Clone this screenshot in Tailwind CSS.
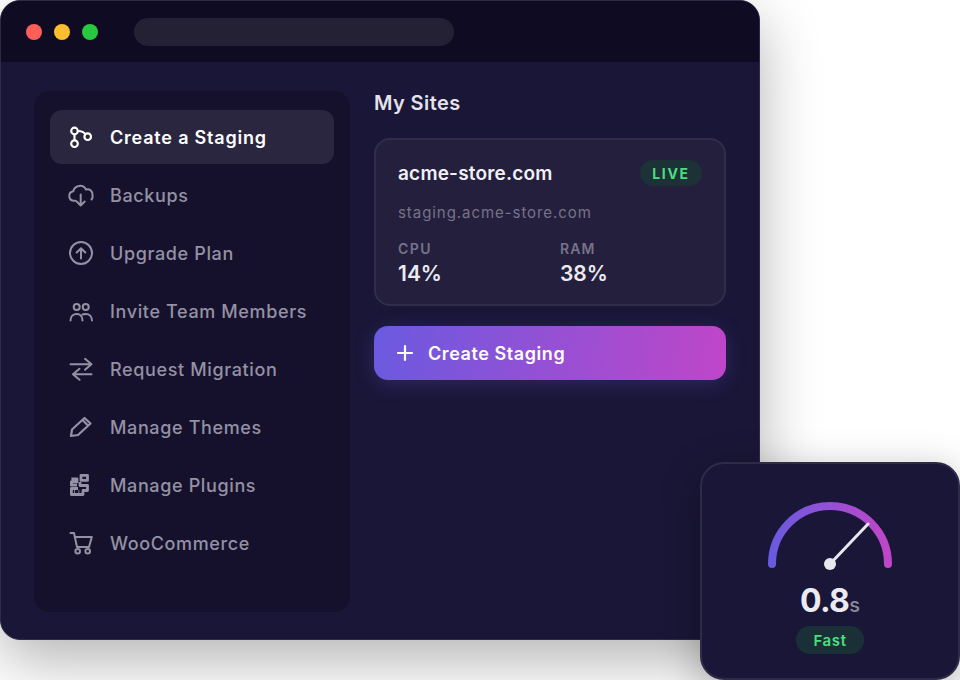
<!DOCTYPE html>
<html>
<head>
<meta charset="utf-8">
<script src="https://cdn.jsdelivr.net/npm/@tailwindcss/browser@4"></script>
</head>
<body class="bg-white">
<div class="relative w-[960px] h-[680px] overflow-hidden bg-white font-['Inter',sans-serif]">
  <div class="w-[760px] h-[640px] rounded-[20px] bg-[#1a1637] border border-[#2e2a47] shadow-[0_20px_60px_rgba(0,0,0,0.3)] overflow-hidden flex flex-col box-border">
    <div class="h-[61px] shrink-0 bg-[#0e0b23] flex items-center pl-[25px] pt-[1px]">
      <span class="w-4 h-4 rounded-full bg-[#ff5f57]"></span>
      <span class="w-4 h-4 rounded-full bg-[#febc2e] ml-3"></span>
      <span class="w-4 h-4 rounded-full bg-[#28c840] ml-3"></span>
      <span class="w-[320px] h-7 rounded-[14px] bg-[#242135] ml-[36px]"></span>
    </div>
    <div class="flex-1 flex pl-[33px] pt-[29px] gap-6">
      <nav class="w-[316px] h-[521px] rounded-2xl bg-[#15112c] px-4 pt-[19px] flex flex-col gap-1">
        <a class="h-[54px] shrink-0 rounded-xl bg-[#2a2640] flex items-center gap-[17px] pl-[19px] text-white font-semibold text-lg tracking-[0.800px]">
          <svg class="w-6 h-6 shrink-0 overflow-visible" viewBox="0 0 24 24" fill="none" stroke="currentColor" stroke-width="2.200"><circle cx="5.500" cy="6" r="3.300"/><circle cx="5.500" cy="18.700" r="3.300"/><circle cx="18.700" cy="11.700" r="3.300"/><path d="M5.500 9.300v6.100M8.800 6c2.500 0 5.700 0 7.500 3.300"/></svg>
          <span class="pt-[2px]">Create a Staging</span>
        </a>
        <a class="h-[54px] shrink-0 rounded-xl flex items-center gap-[17px] pl-[19px] text-[#9491a5] font-medium text-lg tracking-[0.630px]">
          <svg class="w-6 h-6 shrink-0 overflow-visible" viewBox="0 0 24 24" fill="none" stroke="currentColor" stroke-width="2" stroke-linecap="round" stroke-linejoin="round"><path d="M6.500 17.800H4.500a4.800 4.800 0 0 1-.2-9.500A6.800 6.800 0 0 1 17 6.500a5 5 0 0 1 6.500 5.500 5 5 0 0 1-1 4.500"/><path d="M11.700 11.500v11M7.700 18.500l4 4 4-4"/></svg>
          <span class="pt-[2px]">Backups</span>
        </a>
        <a class="h-[54px] shrink-0 rounded-xl flex items-center gap-[17px] pl-[19px] text-[#9491a5] font-medium text-lg tracking-[0.630px]">
          <svg class="w-6 h-6 shrink-0" viewBox="0 0 24 24" fill="none" stroke="currentColor" stroke-width="2" stroke-linecap="round" stroke-linejoin="round"><circle cx="12" cy="12" r="11"/><path d="M12 17.500V7.500M7.700 11.500l4.300-4.300 4.300 4.300"/></svg>
          <span class="pt-[2px]">Upgrade Plan</span>
        </a>
        <a class="h-[54px] shrink-0 rounded-xl flex items-center gap-[17px] pl-[19px] text-[#9491a5] font-medium text-lg tracking-[0.630px]">
          <svg class="w-6 h-6 shrink-0" viewBox="0 0 24 24" fill="none" stroke="currentColor" stroke-width="2" stroke-linecap="round"><circle cx="7.700" cy="8" r="3"/><circle cx="16.700" cy="8" r="3"/><path d="M1.500 21.500c0-4 2.800-6.500 6.200-6.500s5.800 2.500 5.800 6.500M13.500 15.500c1-.4 2-.5 3.200-.5 3.500 0 6.300 2.500 6.300 6.500"/></svg>
          <span class="pt-[2px]">Invite Team Members</span>
        </a>
        <a class="h-[54px] shrink-0 rounded-xl flex items-center gap-[17px] pl-[19px] text-[#9491a5] font-medium text-lg tracking-[0.630px]">
          <svg class="w-6 h-6 shrink-0" viewBox="0 0 24 24" fill="none" stroke="currentColor" stroke-width="2" stroke-linecap="round" stroke-linejoin="round"><path d="M1.500 7.300H22.500M16 1.800l6.500 5.500-6.500 5.500"/><path d="M22.500 17.300H4M10.500 11.800l-6.500 5.500 6.500 5.500"/></svg>
          <span class="pt-[2px]">Request Migration</span>
        </a>
        <a class="h-[54px] shrink-0 rounded-xl flex items-center gap-[17px] pl-[19px] text-[#9491a5] font-medium text-lg tracking-[0.630px]">
          <svg class="w-6 h-6 shrink-0" viewBox="0 0 24 24" fill="none" stroke="currentColor" stroke-width="2.200" stroke-linejoin="round"><path d="M2 21l1-6.500L15.500 3l6 5.500L9 20z"/><path d="M13.500 5l5.500 5.500"/></svg>
          <span class="pt-[2px]">Manage Themes</span>
        </a>
        <a class="h-[54px] shrink-0 rounded-xl flex items-center gap-[17px] pl-[19px] text-[#9491a5] font-medium text-lg tracking-[0.630px]">
          <svg class="w-6 h-6 shrink-0" viewBox="0 0 24 24" fill="none" stroke="currentColor" stroke-width="2.800" stroke-linejoin="round"><path d="M12 2.400h6.500v5H12zM2.400 6h5.600v2.800H2.400v3.400H8M11 9v3.500h7.500v5H14v4H2.400v-6h6.600"/><path d="M5 18.500h.8M9.500 18.500h.8"/></svg>
          <span class="pt-[2px]">Manage Plugins</span>
        </a>
        <a class="h-[54px] shrink-0 rounded-xl flex items-center gap-[17px] pl-[19px] text-[#9491a5] font-medium text-lg tracking-[0.630px]">
          <svg class="w-6 h-6 shrink-0" viewBox="0 0 24 24" fill="none" stroke="currentColor" stroke-width="2" stroke-linecap="round" stroke-linejoin="round"><path d="M1.500 2H5l3 14h11.500"/><path d="M5.800 6H22.800l-2.800 10"/><circle cx="8.700" cy="20.300" r="2.300"/><circle cx="18.700" cy="20.300" r="2.300"/></svg>
          <span class="pt-[2px]">WooCommerce</span>
        </a>
      </nav>
      <main class="w-[352px] flex flex-col">
        <h2 class="text-[20px] leading-6 font-semibold tracking-[0.400px] text-[#e4e2ec] mb-[23px]">My Sites</h2>
        <section class="h-[168px] rounded-2xl bg-[#231f3c] border-2 border-[#312d49] px-[22px] pt-[21px] box-border">
          <div class="flex items-center justify-between h-[26px] -mt-px">
            <span class="text-[19px] font-semibold tracking-[0.200px] text-[#f1f0f6] pt-[2px]">acme-store.com</span>
            <span class="h-[26px] w-[62px] rounded-full bg-[#1c3237] text-[#4ade80] text-[14px] font-bold tracking-[1.700px] flex items-center justify-center">LIVE</span>
          </div>
          <p class="text-[15px] leading-5 tracking-[0.940px] text-[#777389] mt-[17px]">staging.acme-store.com</p>
          <div class="grid grid-cols-[162px_1fr] mt-[18px]">
            <div>
              <div class="text-[14px] leading-4 font-semibold tracking-[1.400px] text-[#777389]">CPU</div>
              <div class="text-[21px] leading-6 font-semibold text-[#ebeaf1] mt-[5px]">14%</div>
            </div>
            <div>
              <div class="text-[14px] leading-4 font-semibold tracking-[1.100px] text-[#777389]">RAM</div>
              <div class="text-[21px] leading-6 font-semibold text-[#ebeaf1] mt-[5px]">38%</div>
            </div>
          </div>
        </section>
        <button class="mt-[20px] h-[54px] rounded-[14px] bg-[linear-gradient(100deg,#6a5ae0,#c046c8)] shadow-[0_4px_20px_rgba(108,92,231,0.25)] flex items-center gap-[14px] pl-[22px] text-white font-semibold text-lg tracking-[0.570px]">
          <svg class="w-[18px] h-[18px]" viewBox="0 0 18 18" fill="none" stroke="currentColor" stroke-width="2.200" stroke-linecap="round"><path d="M9 2v14M2 9h14"/></svg>
          <span class="pt-[2px]">Create Staging</span>
        </button>
      </main>
    </div>
  </div>

  <aside class="absolute left-[700px] top-[462px] w-[260px] h-[218px] rounded-[24px] bg-[#1a1637] border-2 border-[#2e2a47] shadow-[0_10px_40px_rgba(0,0,0,0.3)] box-border flex flex-col items-center">
    <svg class="mt-[36px] shrink-0" width="130" height="72" viewBox="0 0 130 72" fill="none">
      <defs><linearGradient id="g" x1="0" y1="0" x2="1" y2="0"><stop offset="0" stop-color="#6a5ae0"/><stop offset="1" stop-color="#c046c8"/></linearGradient></defs>
      <path d="M7 64a58 58 0 0 1 116 0" stroke="url(#g)" stroke-width="8" stroke-linecap="round"/>
      <path d="M65 64L103 24" stroke="#e8e7ee" stroke-width="3" stroke-linecap="round"/>
      <circle cx="65" cy="64" r="6" fill="#e8e7ee"/>
    </svg>
    <div class="mt-[9px] flex items-baseline leading-10 text-[#ebeaf1]"><span class="text-[32px] font-bold tracking-[-0.600px]">0.8</span><span class="text-[20px] font-medium text-[#8b889c]">s</span></div>
    <span class="mt-[1px] pt-[2px] h-7 w-[68px] rounded-full bg-[#1a3036] text-[#4ade80] text-[15px] font-semibold tracking-[0.600px] flex items-center justify-center">Fast</span>
  </aside>
</div>
</body>
</html>
